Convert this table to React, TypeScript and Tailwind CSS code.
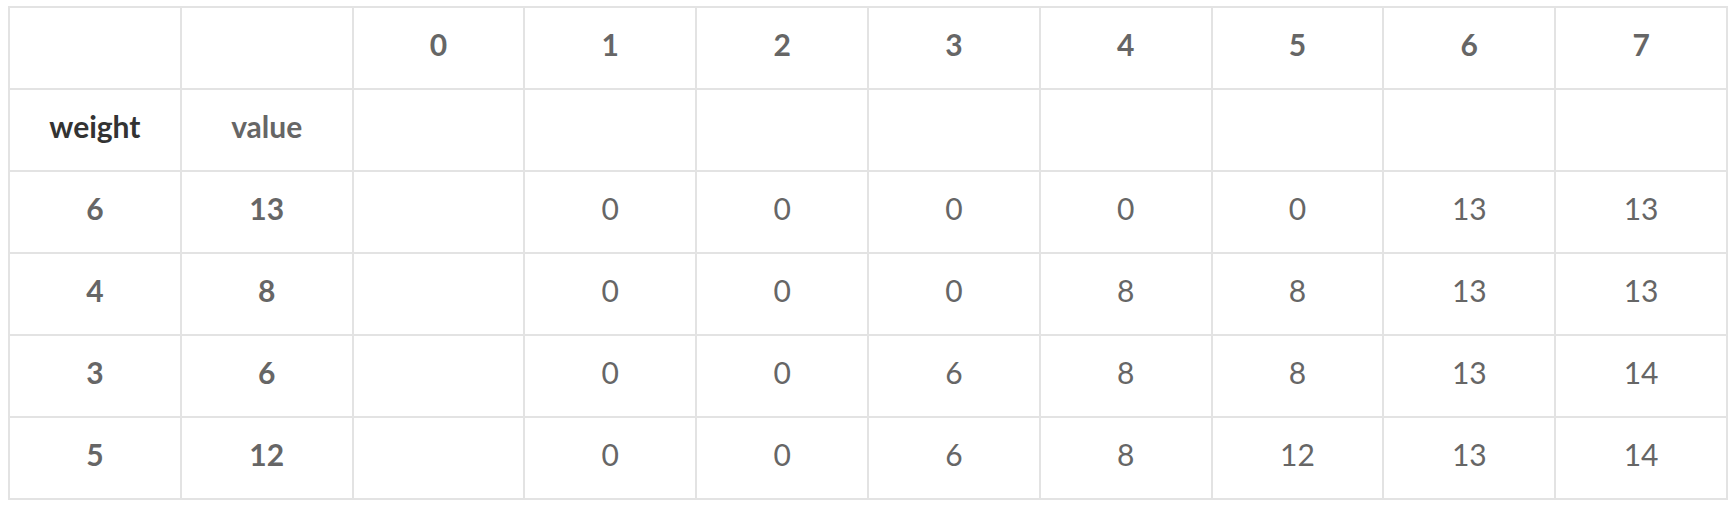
import React from "react";

const headers = ["0", "1", "2", "3", "4", "5", "6", "7"];
const rows: { w: string; v: string; cells: string[] }[] = [
  { w: "6", v: "13", cells: ["", "0", "0", "0", "0", "0", "13", "13"] },
  { w: "4", v: "8", cells: ["", "0", "0", "0", "8", "8", "13", "13"] },
  { w: "3", v: "6", cells: ["", "0", "0", "6", "8", "8", "13", "14"] },
  { w: "5", v: "12", cells: ["", "0", "0", "6", "8", "12", "13", "14"] },
];

function Cell({ children, className = "" }: { children?: React.ReactNode; className?: string }) {
  return (
    <div className={"h-[82px] pb-[8px] flex items-center justify-center border-r-2 border-b-2 border-[#e3e3e3] " + className}>
      {children}
    </div>
  );
}

export default function App() {
  return (
    <div className="bg-white w-[1736px] h-[512px] pl-[8px] pt-[6px]" style={{ fontFamily: "Lato, 'Noto Sans', sans-serif" }}>
      <div className="w-[1720px] grid grid-cols-10 border-l-2 border-t-2 border-[#e3e3e3] text-[30px] text-[#666666]">
        <Cell />
        <Cell />
        {headers.map((h) => (
          <Cell key={h} className="font-bold">{h}</Cell>
        ))}
        <Cell className="font-bold text-[#333333]">weight</Cell>
        <Cell className="font-bold">value</Cell>
        {headers.map((h) => (
          <Cell key={"e" + h} />
        ))}
        {rows.map((r, i) => (
          <React.Fragment key={i}>
            <Cell className="font-bold">{r.w}</Cell>
            <Cell className="font-bold">{r.v}</Cell>
            {r.cells.map((c, j) => (
              <Cell key={j} className="font-normal">{c}</Cell>
            ))}
          </React.Fragment>
        ))}
      </div>
    </div>
  );
}
